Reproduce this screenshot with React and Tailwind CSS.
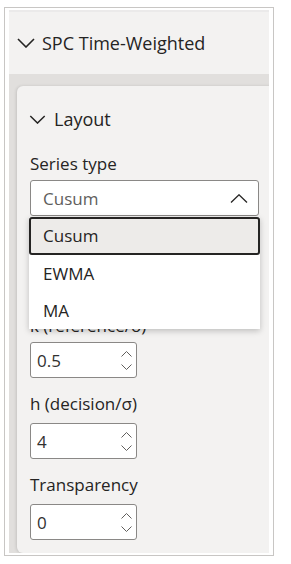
const font = { fontFamily: '"Open Sans", "Noto Sans", sans-serif' };

const ChevronDown = ({ className }) => (
  <svg className={className} viewBox="0 0 18 10" fill="none">
    <polyline points="1,1 9,9 17,1" stroke="#252423" strokeWidth="1.6" />
  </svg>
);

const Spinner = () => (
  <div className="flex flex-col items-center gap-[7px] mr-[4px]">
    <svg className="w-[11px] h-[6px]" viewBox="0 0 11 6" fill="none">
      <polyline points="0.5,5.5 5.5,0.5 10.5,5.5" stroke="#605e5c" strokeWidth="1" />
    </svg>
    <svg className="w-[11px] h-[6px]" viewBox="0 0 11 6" fill="none">
      <polyline points="0.5,0.5 5.5,5.5 10.5,0.5" stroke="#605e5c" strokeWidth="1" />
    </svg>
  </div>
);

const NumberField = ({ label, value, labelClass = 'pb-[5px]' }) => (
  <div className="flex flex-col">
    <div className={`h-[34px] ${labelClass} flex items-center text-[17px] text-[#252423] leading-none`}>{label}</div>
    <div className="w-[107px] h-[36px] border border-[#8a8886] rounded-[3px] bg-white flex items-center justify-between pl-[6px]">
      <span className="text-[17px] text-[#323130] leading-none">{value}</span>
      <Spinner />
    </div>
  </div>
);

const App = () => {
  const options = ['Cusum', 'EWMA', 'MA'];

  return (
    <div className="w-[291px] h-[564px] bg-white pt-[7px] pl-[4px]" style={font}>
      <div className="w-[270px] h-[549px] border border-[#c8c6c4] pt-[2px] px-[4px] pb-[2px] flex">
        <div className="w-[260px] bg-[#f3f2f1] flex flex-col overflow-hidden">
          <div className="h-[64px] shrink-0 flex items-center pl-[8px] gap-[7px] border-t-2 border-[#ebeaea]">
            <ChevronDown className="w-[18px] h-[10px]" />
            <span className="text-[18px] text-[#252423]">SPC Time-Weighted</span>
          </div>

          <div className="flex-1 bg-[#e1dfdd] pt-[12px] pl-[8px] flex">
            <div className="w-[270px] shrink-0 bg-[#f3f2f1] rounded-l-[6px] shadow-[-1px_0_3px_rgba(0,0,0,0.12)] pl-[13px] flex flex-col relative">
              <div className="h-[66px] flex items-center gap-[8px] -ml-[1px]">
                <ChevronDown className="w-[17px] h-[9px]" />
                <span className="text-[18px] text-[#252423]">Layout</span>
              </div>

              <div className="h-[28px] pb-[6px] flex items-center text-[17px] text-[#252423] leading-none">Series type</div>
              <div className="w-[229px] h-[36px] border border-[#8a8886] rounded-[3px] bg-white flex items-center justify-between pl-[12px] pr-[10px]">
                <span className="text-[17px] text-[#605e5c] leading-none">Cusum</span>
                <svg className="w-[18px] h-[9px]" viewBox="0 0 18 9" fill="none">
                  <polyline points="1,8.5 9,0.8 17,8.5" stroke="#252423" strokeWidth="1.3" />
                </svg>
              </div>

              <div className="flex flex-col gap-[11px] mt-[11px]">
                <NumberField label="Target (μ)" value="0" />
                <NumberField label="k (reference/σ)" value="0.5" labelClass="pt-[1px]" />
                <NumberField label="h (decision/σ)" value="4" />
                <NumberField label="Transparency" value="0" />
              </div>

              <div className="absolute left-[12px] top-[131px] w-[231px] bg-white shadow-[0_2px_6px_rgba(0,0,0,0.22)] flex flex-col">
                {options.map((opt, i) => (
                  <div
                    key={opt}
                    className={
                      i === 0
                        ? 'h-[38px] flex items-center pl-[12px] bg-[#edebe9] border-2 border-[#252423] rounded-[3px] text-[17px] text-[#252423]'
                        : 'h-[37px] flex items-center pl-[14px] text-[17px] text-[#252423]'
                    }
                  >
                    {opt}
                  </div>
                ))}
              </div>
            </div>
          </div>
        </div>
      </div>
    </div>
  );
};

export default App;
